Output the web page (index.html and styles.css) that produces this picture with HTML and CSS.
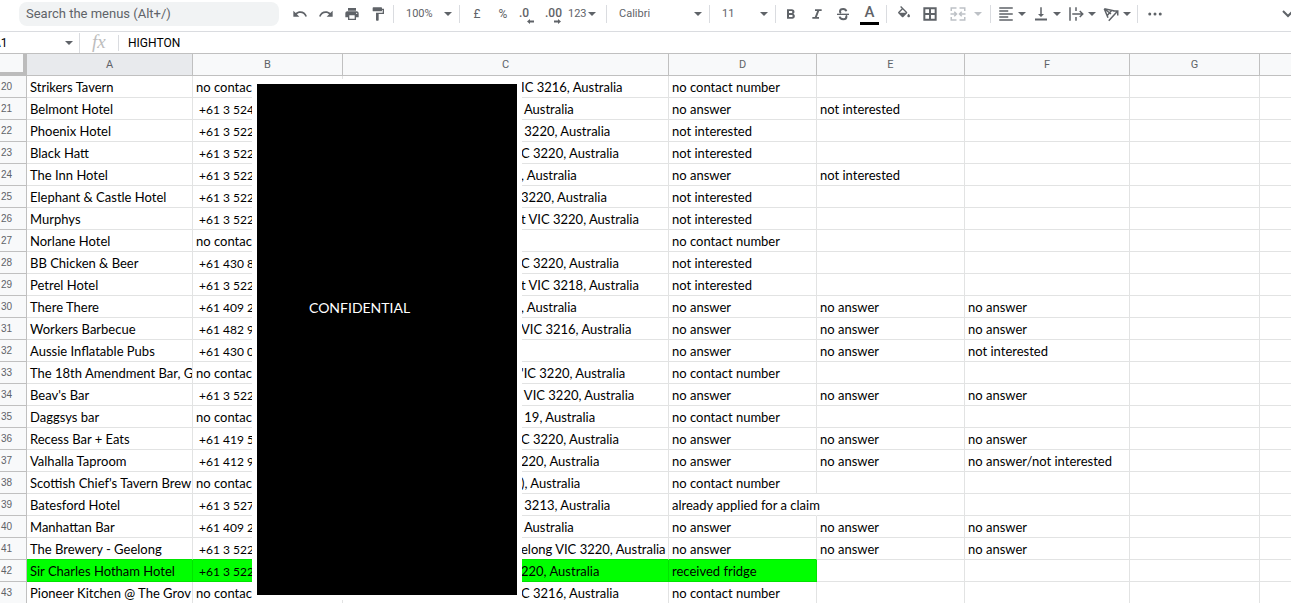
FILE: index.html
```html
<!DOCTYPE html>
<html lang="en">
<head>
<meta charset="utf-8">
<title>Spreadsheet</title>
<link rel="stylesheet" href="styles.css">
</head>
<body>
<header class="toolbar">
  <input class="search" type="search" placeholder="Search the menus (Alt+/)" aria-label="Search the menus">
  <div class="group">
    <button class="tool" aria-label="Undo"><svg viewBox="0 0 24 24"><path d="M12.5 8c-2.65 0-5.05.99-6.9 2.6L2 7v9h9l-3.620-3.620c1.390-1.160 3.160-1.880 5.120-1.880 3.540 0 6.550 2.310 7.600 5.500l2.370-.78C21.080 11.030 17.150 8 12.500 8z"/></svg></button>
    <button class="tool" aria-label="Redo"><svg viewBox="0 0 24 24"><path d="M18.400 10.600C16.550 8.990 14.150 8 11.500 8c-4.650 0-8.580 3.030-9.960 7.220L3.900 16c1.050-3.190 4.050-5.500 7.600-5.500 1.950 0 3.730.72 5.120 1.880L13 16h9V7l-3.600 3.600z"/></svg></button>
    <button class="tool" aria-label="Print"><svg viewBox="0 0 24 24"><path d="M19 8H5c-1.660 0-3 1.340-3 3v6h4v4h12v-4h4v-6c0-1.660-1.340-3-3-3zm-3 11H8v-5h8v5zm3-7c-.55 0-1-.45-1-1s.45-1 1-1 1 .45 1 1-.45 1-1 1zm-1-9H6v4h12V3z"/></svg></button>
    <button class="tool" aria-label="Paint format"><svg viewBox="0 0 24 24"><path d="M18 4V3c0-.55-.45-1-1-1H5c-.55 0-1 .45-1 1v4c0 .55.45 1 1 1h12c.55 0 1-.45 1-1V6h1v4H9v11c0 .55.45 1 1 1h2c.55 0 1-.45 1-1v-9h8V4h-3z"/></svg></button>
  </div>
  <span class="sep"></span>
  <span class="pick pick-small"><select aria-label="Zoom"><option>100%</option></select></span>
  <span class="sep"></span>
  <div class="group group-both">
    <button class="tool" aria-label="Format as currency">£</button>
    <button class="tool" aria-label="Format as percent">%</button>
    <button class="tool decimal" aria-label="Decrease decimal places">.0<svg viewBox="0 0 8 5"><path d="M0 2.500L3 0v1.500h4v2H3V5z"/></svg></button>
    <button class="tool decimal" aria-label="Increase decimal places">.00<svg viewBox="0 0 8 5"><path d="M8 2.500L5 0v1.500H1v2h4V5z"/></svg></button>
    <button class="formats" aria-label="More formats">123<i class="arrow"></i></button>
  </div>
  <span class="sep"></span>
  <span class="pick pick-font"><select aria-label="Font"><option>Calibri</option></select></span>
  <span class="sep"></span>
  <span class="pick pick-small"><select aria-label="Font size"><option>11</option></select></span>
  <span class="sep"></span>
  <div class="group group-end">
    <button class="tool" aria-label="Bold"><svg viewBox="0 0 24 24"><path d="M15.600 11.790c.97-.67 1.650-1.770 1.650-2.790 0-2.260-1.750-4-4-4H6v14h8.040c2.090 0 3.710-1.700 3.710-3.790 0-1.520-.86-2.820-2.150-3.420zM9 7.500h3.500c.83 0 1.500.67 1.500 1.500s-.67 1.500-1.500 1.500H9v-3zm4 9H9v-3h4c.83 0 1.500.67 1.500 1.500s-.67 1.500-1.500 1.500z"/></svg></button>
    <button class="tool" aria-label="Italic"><svg viewBox="0 0 24 24"><path d="M9 5v2.500h3.200L8.700 16.500H5V19h10v-2.500h-3.200l3.500-9H19V5z"/></svg></button>
    <button class="tool" aria-label="Strikethrough"><svg viewBox="0 0 24 24"><path d="M3 11.500h18v2H3z"/><path class="bold-line" d="M17 8c-.5-2-2.300-3.500-4.600-3.500C9.700 4.500 7.500 6 7.500 8.200c0 1.200.6 2 1.500 2.500M7 16c.4 2.300 2.300 3.800 5.400 3.800 2.800 0 4.700-1.600 4.700-3.800 0-.8-.2-1.300-.6-1.800"/></svg></button>
    <button class="tool text-color" aria-label="Text colour">A</button>
  </div>
  <span class="sep"></span>
  <div class="group group-both">
    <button class="tool" aria-label="Fill colour"><svg viewBox="0 0 24 24"><path d="M16.560 8.940L7.620 0 6.210 1.410l2.380 2.380-5.150 5.150c-.59.590-.59 1.540 0 2.120l5.500 5.500c.29.290.680.440 1.060.440s.77-.15 1.060-.44l5.500-5.500c.59-.58.59-1.530 0-2.120zM5.210 10L10 5.210 14.790 10H5.210zM19 11.500s-2 2.170-2 3.500c0 1.100.9 2 2 2s2-.9 2-2c0-1.330-2-3.500-2-3.500z"/></svg></button>
    <button class="tool" aria-label="Borders"><svg viewBox="0 0 24 24"><path class="bold-line" d="M3.500 3.500h17v17h-17zM12 3.500v17M3.500 12h17"/></svg></button>
    <button class="merge" aria-label="Merge cells" disabled><svg viewBox="0 0 24 24"><path class="line" d="M10 4H3v4M14 4h7v4M10 20H3v-4M14 20h7v-4M2 12h8M22 12h-8M7 9l3 3-3 3M17 9l-3 3 3 3"/></svg><i class="arrow"></i></button>
  </div>
  <span class="sep"></span>
  <div class="group group-end">
    <button class="menu" aria-label="Horizontal align"><svg viewBox="0 0 24 24"><path d="M3 3h18v2H3zM3 7h12v2H3zM3 11h18v2H3zM3 15h12v2H3zM3 19h18v2H3z"/></svg><i class="arrow"></i></button>
    <button class="menu" aria-label="Vertical align"><svg viewBox="0 0 24 24"><path d="M16 12h-3V3h-2v9H8l4 4 4-4zM4 18v2.500h16V18z"/></svg><i class="arrow"></i></button>
    <button class="menu" aria-label="Text wrapping"><svg viewBox="0 0 24 24"><path class="line" d="M4 3v18M12 3v5M12 16v5M7 12h13M17 8l4 4-4 4"/></svg><i class="arrow"></i></button>
    <button class="menu" aria-label="Text rotation"><svg viewBox="0 0 24 24"><path class="line" d="M3 5l14 3M3 5l5 12M3 5l9 7M7 14l6-7M9 21L20 9M15 8h6v6"/></svg><i class="arrow"></i></button>
  </div>
  <span class="sep"></span>
  <button class="more" aria-label="More"><svg viewBox="0 0 24 24"><circle cx="5" cy="12" r="2"/><circle cx="12" cy="12" r="2"/><circle cx="19" cy="12" r="2"/></svg></button>
  <button class="collapse" aria-label="Hide the menus"><svg viewBox="0 0 9 12"><path class="line" d="M1 3l5 5 5-5"/></svg></button>
</header>

<div class="formula-bar">
  <button class="name-box" aria-label="Name box"><span>A1</span><i class="arrow"></i></button>
  <span class="fx">fx</span>
  <input class="formula" value="HIGHTON" aria-label="Formula">
</div>

<main class="sheet">
<table class="grid">
<colgroup><col class="col-num"><col class="col-a"><col class="col-b"><col class="col-c"><col class="col-d"><col class="col-d"><col class="col-f"><col class="col-g"><col></colgroup>
<thead><tr><th class="corner"></th><th class="active">A</th><th>B</th><th>C</th><th>D</th><th>E</th><th>F</th><th>G</th><th></th></tr></thead>
<tbody>
<tr><th>20</th><td>Strikers Tavern</td><td>no contac</td><td>IC 3216, Australia</td><td>no contact number</td><td></td><td></td><td></td><td></td></tr>
<tr><th>21</th><td>Belmont Hotel</td><td class="phone"> +61 3 524</td><td> Australia</td><td>no answer</td><td>not interested</td><td></td><td></td><td></td></tr>
<tr><th>22</th><td>Phoenix Hotel</td><td class="phone"> +61 3 522</td><td> 3220, Australia</td><td>not interested</td><td></td><td></td><td></td><td></td></tr>
<tr><th>23</th><td>Black Hatt</td><td class="phone"> +61 3 522</td><td>C 3220, Australia</td><td>not interested</td><td></td><td></td><td></td><td></td></tr>
<tr><th>24</th><td>The Inn Hotel</td><td class="phone"> +61 3 522</td><td>, Australia</td><td>no answer</td><td>not interested</td><td></td><td></td><td></td></tr>
<tr><th>25</th><td>Elephant &amp; Castle Hotel</td><td class="phone"> +61 3 522</td><td>3220, Australia</td><td>not interested</td><td></td><td></td><td></td><td></td></tr>
<tr><th>26</th><td>Murphys</td><td class="phone"> +61 3 522</td><td>t VIC 3220, Australia</td><td>not interested</td><td></td><td></td><td></td><td></td></tr>
<tr><th>27</th><td>Norlane Hotel</td><td>no contac</td><td></td><td>no contact number</td><td></td><td></td><td></td><td></td></tr>
<tr><th>28</th><td>BB Chicken &amp; Beer</td><td class="phone"> +61 430 8</td><td>C 3220, Australia</td><td>not interested</td><td></td><td></td><td></td><td></td></tr>
<tr><th>29</th><td>Petrel Hotel</td><td class="phone"> +61 3 522</td><td>t VIC 3218, Australia</td><td>not interested</td><td></td><td></td><td></td><td></td></tr>
<tr><th>30</th><td>There There</td><td class="phone"> +61 409 2</td><td>, Australia</td><td>no answer</td><td>no answer</td><td>no answer</td><td></td><td></td></tr>
<tr><th>31</th><td>Workers Barbecue</td><td class="phone"> +61 482 9</td><td>VIC 3216, Australia</td><td>no answer</td><td>no answer</td><td>no answer</td><td></td><td></td></tr>
<tr><th>32</th><td>Aussie Inflatable Pubs</td><td class="phone"> +61 430 0</td><td></td><td>no answer</td><td>no answer</td><td>not interested</td><td></td><td></td></tr>
<tr><th>33</th><td>The 18th Amendment Bar, G</td><td>no contac</td><td>'IC 3220, Australia</td><td>no contact number</td><td></td><td></td><td></td><td></td></tr>
<tr><th>34</th><td>Beav's Bar</td><td class="phone"> +61 3 522</td><td> VIC 3220, Australia</td><td>no answer</td><td>no answer</td><td>no answer</td><td></td><td></td></tr>
<tr><th>35</th><td>Daggsys bar</td><td>no contac</td><td> 19, Australia</td><td>no contact number</td><td></td><td></td><td></td><td></td></tr>
<tr><th>36</th><td>Recess Bar + Eats</td><td class="phone"> +61 419 5</td><td>C 3220, Australia</td><td>no answer</td><td>no answer</td><td>no answer</td><td></td><td></td></tr>
<tr><th>37</th><td>Valhalla Taproom</td><td class="phone"> +61 412 9</td><td>220, Australia</td><td>no answer</td><td>no answer</td><td>no answer/not interested</td><td></td><td></td></tr>
<tr><th>38</th><td>Scottish Chief's Tavern Brew</td><td>no contac</td><td>), Australia</td><td>no contact number</td><td></td><td></td><td></td><td></td></tr>
<tr><th>39</th><td>Batesford Hotel</td><td class="phone"> +61 3 527</td><td> 3213, Australia</td><td class="spill">already applied for a claim</td><td></td><td></td><td></td><td></td></tr>
<tr><th>40</th><td>Manhattan Bar</td><td class="phone"> +61 409 2</td><td> Australia</td><td>no answer</td><td>no answer</td><td>no answer</td><td></td><td></td></tr>
<tr class="above-marked"><th>41</th><td>The Brewery - Geelong</td><td class="phone"> +61 3 522</td><td>elong VIC 3220, Australia</td><td>no answer</td><td>no answer</td><td>no answer</td><td></td><td></td></tr>
<tr class="marked"><th>42</th><td>Sir Charles Hotham Hotel</td><td class="phone"> +61 3 522</td><td>220, Australia</td><td>received fridge</td><td></td><td></td><td></td><td></td></tr>
<tr><th>43</th><td>Pioneer Kitchen @ The Grov</td><td>no contac</td><td>C 3216, Australia</td><td>no contact number</td><td></td><td></td><td></td><td></td></tr>
</tbody>
</table>
<div class="cover">CONFIDENTIAL</div>
</main>
</body>
</html>
```
FILE: styles.css
```css
* { box-sizing: border-box; }

body {
  margin: 0;
  overflow: hidden;
  background: #fff;
  color: #000;
  font-family: Roboto, "Liberation Sans", sans-serif;
  font-size: 11px;
}

button, input, select {
  margin: 0;
  padding: 0;
  border: 0;
  background: none;
  color: inherit;
  font: inherit;
  outline: none;
}

svg {
  flex: none;
  width: 18px;
  height: 18px;
  fill: currentColor;
}

.line, .bold-line {
  fill: none;
  stroke: currentColor;
  stroke-width: 2;
}
.bold-line { stroke-width: 3; }

/* Toolbar */
.toolbar {
  display: flex;
  align-items: center;
  height: 32px;
  padding: 0 0 4px 19px;
  border-bottom: 1px solid #dadce0;
  color: #5f6368;
}

.search {
  width: 260px;
  height: 24px;
  margin-right: 8px;
  padding: 0 7px;
  border-radius: 8px;
  background: #f1f3f4;
  font-size: 13px;
  appearance: none;
}
.search::placeholder { color: #5f6368; opacity: 1; }

.group, .tool, .formats, .merge, .menu, .more, .collapse {
  display: flex;
  align-items: center;
}
.group-end { padding-right: 2px; }
.group-both { padding: 0 2px; }

.sep {
  flex: none;
  width: 1px;
  height: 18px;
  margin: 0 2px;
  background: #dadce0;
}

.tool {
  justify-content: center;
  width: 26px;
  height: 26px;
  font-size: 12px;
}
.tool svg { width: 16px; height: 16px; }

.decimal {
  flex-direction: column;
  align-items: flex-start;
  padding: 4px 0 0 3px;
  line-height: 12px;
  font-weight: 500;
}
.tool.decimal svg {
  width: 8px;
  height: 5px;
  margin-left: 8px;
}

.arrow {
  flex: none;
  border: solid transparent;
  border-width: 4px 4px 0;
  border-top-color: #5f6368;
}

.formats { width: 34px; gap: 1px; }
.merge { width: 43px; padding-left: 6px; gap: 7px; color: #bdc1c6; }
.merge .arrow { border-top-color: #bdc1c6; }
.menu { width: 35px; padding-left: 4px; gap: 3px; }
.menu svg, .merge svg { width: 18px; height: 18px; }
.more { width: 30px; justify-content: center; }
.collapse { margin-left: auto; }
.collapse svg { width: 9px; height: 12px; }

.text-color {
  width: 19px;
  height: 22px;
  margin: 0 3px 0 4px;
  border-bottom: 3px solid #000;
  font-size: 15px;
  font-weight: 500;
  line-height: 19px;
}

.pick {
  position: relative;
  display: flex;
  align-items: center;
}
.pick::after {
  content: "";
  position: absolute;
  right: 5px;
  border: solid transparent;
  border-width: 4px 4px 0;
  border-top-color: #5f6368;
  pointer-events: none;
}
.pick select {
  width: 100%;
  height: 24px;
  padding-left: 10px;
  appearance: none;
}
.pick-small { width: 61px; }
.pick-font { width: 98px; }

/* Formula bar */
.formula-bar {
  display: flex;
  align-items: center;
  height: 22px;
  border-bottom: 1px solid #c0c0c0;
}
.name-box {
  display: flex;
  align-items: center;
  justify-content: space-between;
  width: 87px;
  height: 20px;
  margin-left: -7px;
  padding-right: 6px;
  border-right: 1px solid #dadce0;
  font-size: 12px;
}
.name-box .arrow { border-top-color: #5f6368; }
.fx {
  width: 39px;
  height: 16px;
  padding-left: 12px;
  border-right: 1px solid #dadce0;
  color: #bdbdbd;
  font: italic 19px/14px "Liberation Serif", serif;
}
.formula {
  flex: 1;
  padding-left: 9px;
  font-size: 12px;
}

/* Sheet */
.sheet { position: relative; }

.grid {
  width: 100%;
  table-layout: fixed;
  border-collapse: separate;
  border-spacing: 0;
}
.col-num { width: 27px; }
.col-a { width: 166px; }
.col-b { width: 150px; }
.col-c { width: 326px; }
.col-d { width: 148px; }
.col-f { width: 165px; }
.col-g { width: 130px; }

.grid th, .grid td {
  height: 22px;
  border: solid #e2e3e3;
  border-width: 0 1px 1px 0;
  white-space: pre;
  overflow: hidden;
}
.grid th {
  padding: 0;
  border-color: #c0c0c0;
  background: #f8f9fa;
  color: #5f6368;
  font-weight: 400;
  line-height: 21px;
}
.grid tbody th {
  padding-left: 1px;
  font: 10px/21px "Liberation Sans", sans-serif;
  text-align: left;
}
.grid .active { background: #e8eaed; }
.grid .corner {
  border: solid #bcbcbc;
  border-width: 0 4px 4px 0;
}
.grid td {
  padding: 2px 0 0 3px;
  font-family: Lato, "Noto Sans", sans-serif;
  font-size: 13px;
  line-height: 19px;
}
.grid td:nth-child(4) { padding-left: 178px; }
.grid tr > :last-child { border-right: 0; }
.grid .phone { font-size: 12px; }

.grid .spill {
  overflow: visible;
  border-right-color: transparent;
}

.above-marked td:nth-child(-n+5) { border-bottom-color: #00e400; }
.grid .marked td:nth-child(-n+5) {
  background: #0f0;
  border-color: #00e400;
}

/* Redaction panel lying over columns B and C */
.cover {
  position: absolute;
  top: 25px;
  left: 252px;
  width: 270px;
  height: 521px;
  padding: 214px 0 0 52px;
  border: 5px solid #fff;
  background: #000;
  color: #fff;
  font: 14px/20px Lato, "Noto Sans", sans-serif;
}
```
